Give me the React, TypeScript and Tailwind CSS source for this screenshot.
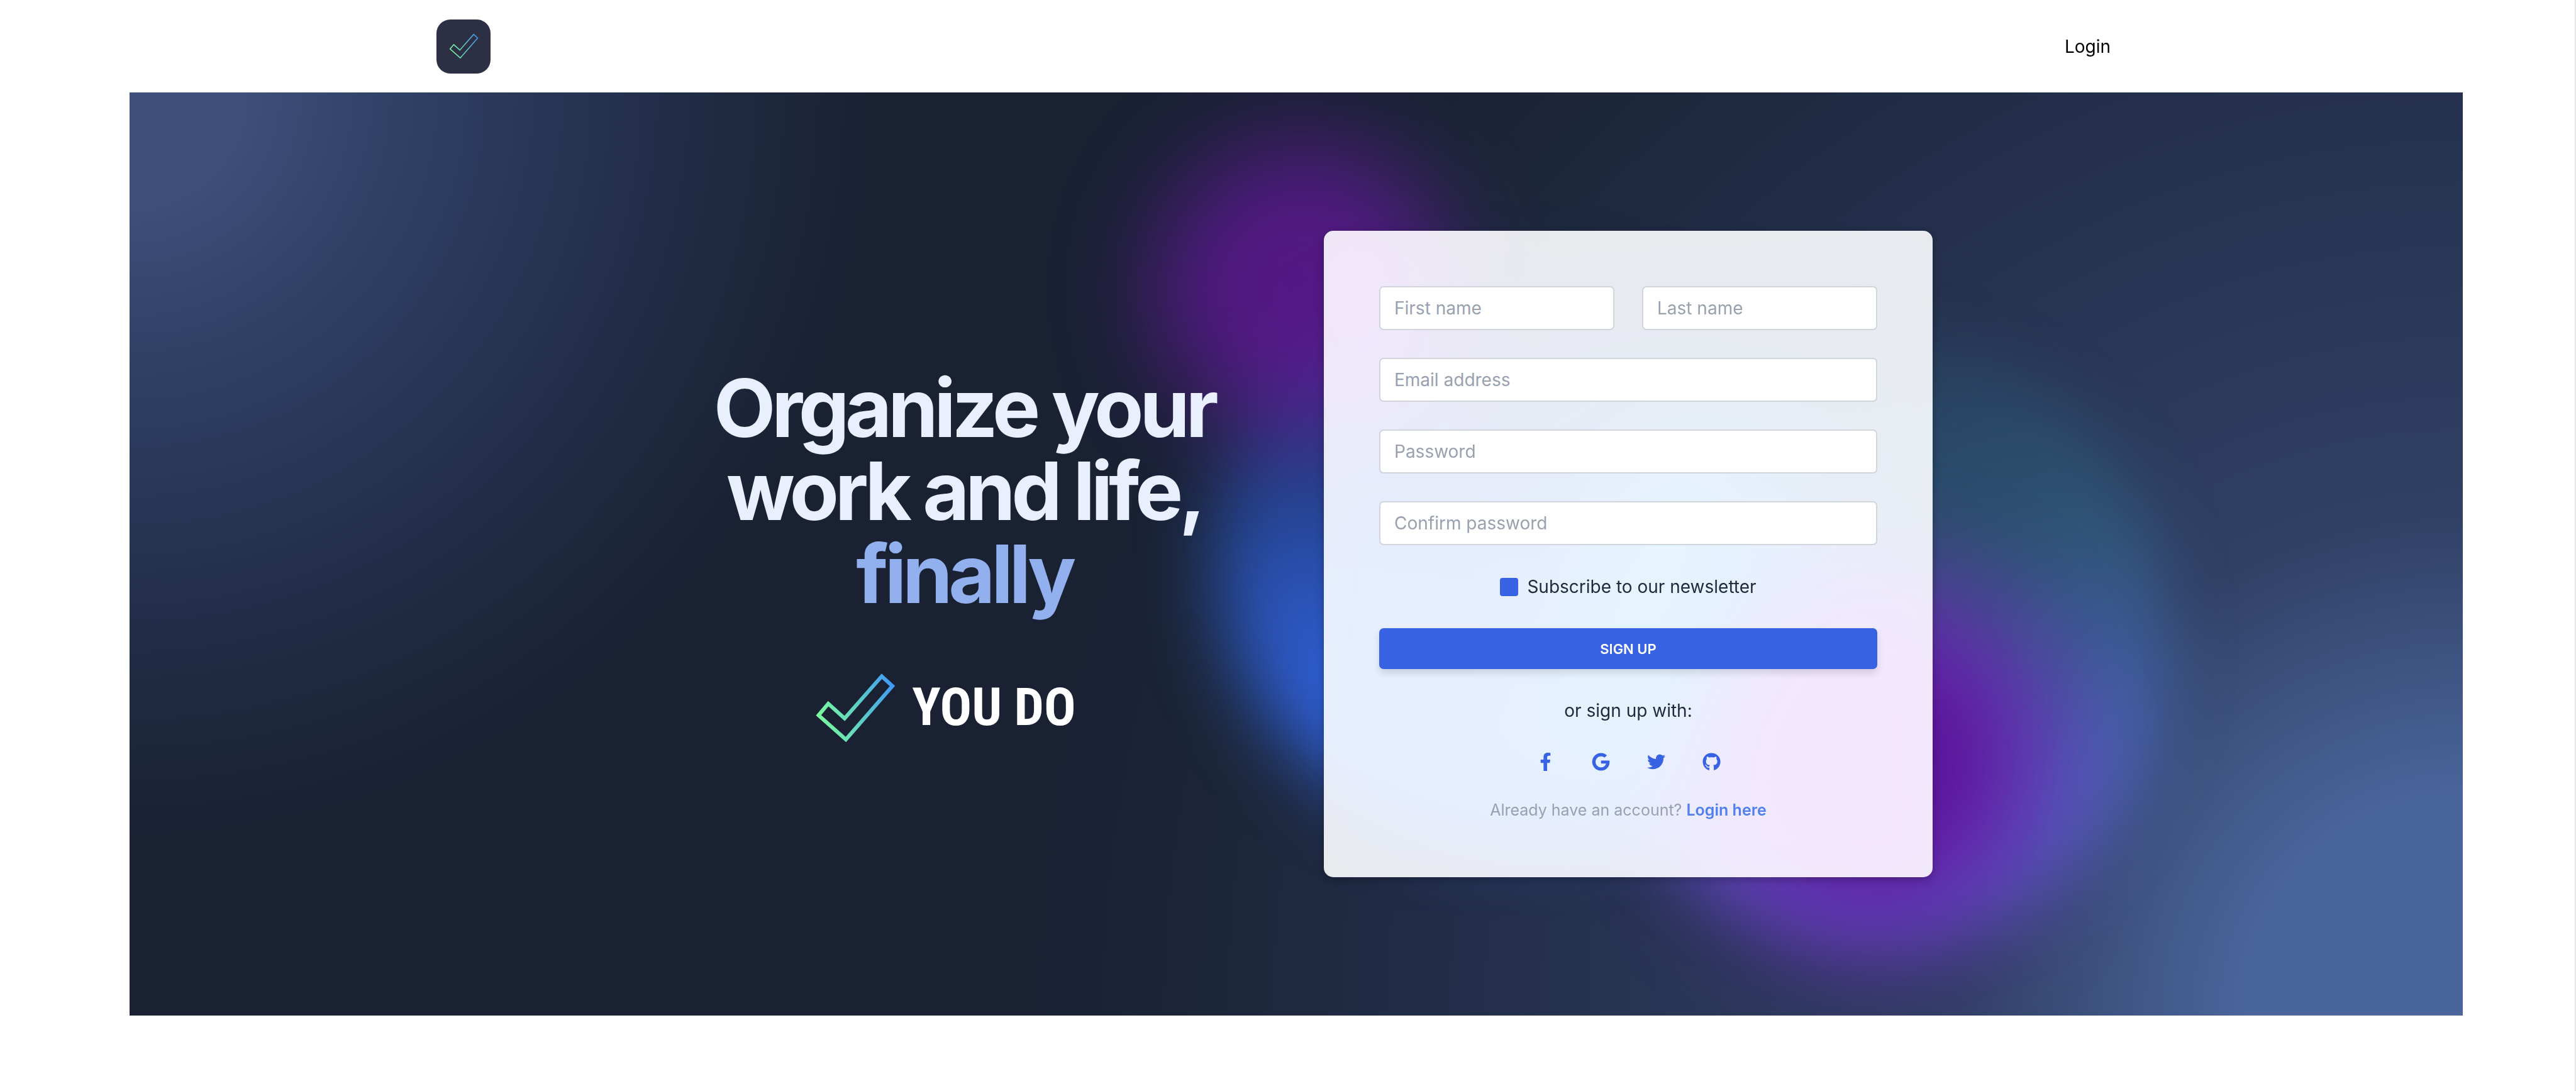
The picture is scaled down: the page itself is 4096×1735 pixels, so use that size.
import type { InputHTMLAttributes, ReactNode } from "react";
import { FaFacebookF, FaGithub, FaGoogle, FaTwitter } from "react-icons/fa";

function CheckMark({ id, className, stroke }: { id: string; className: string; stroke: number }) {
  return (
    <svg viewBox="0 0 126 109" fill="none" className={className} aria-hidden="true">
      <defs>
        <linearGradient id={id} x1="0" y1="60" x2="126" y2="30" gradientUnits="userSpaceOnUse">
          <stop offset="0" stopColor="#7bfb9c" />
          <stop offset="0.5" stopColor="#5fd0c4" />
          <stop offset="1" stopColor="#4199f5" />
        </linearGradient>
      </defs>
      <path
        d="M4.5 66.5 L20 48 L46 71.5 L105 4.5 L122 20 L48 105 Z"
        stroke={`url(#${id})`}
        strokeWidth={stroke}
      />
    </svg>
  );
}

function Field({ label, ...rest }: { label: string } & InputHTMLAttributes<HTMLInputElement>) {
  return (
    <input
      aria-label={label}
      placeholder={label}
      className="h-[70px] w-full min-w-0 rounded-[7px] border-2 border-gray-300 bg-white px-[22px] text-[28px] text-gray-700 placeholder:text-gray-400"
      {...rest}
    />
  );
}

function SocialButton({ label, children }: { label: string; children: ReactNode }) {
  return (
    <button type="button" aria-label={label} className="flex w-[88px] justify-center text-[29px] text-[#3862e4]">
      {children}
    </button>
  );
}

function Header() {
  return (
    <header className="mx-auto flex h-[147px] max-w-[2706px] items-center justify-between">
      <a href="#" aria-label="You Do" className="flex size-[86px] items-center justify-center rounded-[22px] bg-[#2d2f45]">
        <CheckMark id="mark-small" stroke={4} className="w-[47px]" />
      </a>
      <a href="#login" className="px-[44px] text-[28px] text-black">
        Login
      </a>
    </header>
  );
}

function SignUpCard() {
  return (
    <form
      onSubmit={(e) => e.preventDefault()}
      className="relative flex flex-col rounded-[15px] bg-white/90 p-[88px] text-[28px] leading-[44px] text-gray-800 shadow-[0_4px_14px_rgba(0,0,0,0.25)] backdrop-blur-[46px] backdrop-saturate-200"
    >
      <div className="flex flex-col gap-[44px]">
        <div className="grid grid-cols-2 gap-[44px]">
          <Field label="First name" type="text" />
          <Field label="Last name" type="text" />
        </div>
        <Field label="Email address" type="email" />
        <Field label="Password" type="password" />
        <Field label="Confirm password" type="password" />
        <label className="flex items-center justify-center gap-[14px]">
          <input type="checkbox" defaultChecked className="size-[29px] appearance-none rounded-[4px] bg-[#3862e4]" />
          Subscribe to our newsletter
        </label>
        <button
          type="submit"
          className="h-[65px] rounded-[7px] bg-[#3862e4] text-[22px] font-semibold text-white uppercase shadow-[0_7px_12px_rgba(0,0,0,0.12)]"
        >
          Sign up
        </button>
        <p className="text-center">or sign up with:</p>
      </div>
      <div className="flex h-[118px] items-center justify-center">
        <SocialButton label="Facebook">
          <FaFacebookF />
        </SocialButton>
        <SocialButton label="Google">
          <FaGoogle />
        </SocialButton>
        <SocialButton label="Twitter">
          <FaTwitter />
        </SocialButton>
        <SocialButton label="GitHub">
          <FaGithub />
        </SocialButton>
      </div>
      <p className="text-center text-[25px] leading-[37px] text-gray-400">
        Already have an account?{" "}
        <a href="#login" className="font-semibold text-[#4f80ee]">
          Login here
        </a>
      </p>
    </form>
  );
}

function Glow() {
  return (
    <div aria-hidden="true" className="absolute inset-0">
      <div className="absolute top-[70px] -left-[170px] h-[880px] w-[980px] rounded-full bg-[linear-gradient(10deg,#2f60d8_22%,rgba(45,92,208,0.8)_40%,rgba(40,80,190,0.45)_62%,rgba(40,80,190,0.15)_80%,rgba(40,80,190,0.05)_100%)] blur-[60px]" />
      <div className="absolute top-[170px] left-[420px] h-[960px] w-[920px] rounded-full bg-[linear-gradient(165deg,rgba(45,125,150,0.1)_5%,rgba(50,125,155,0.35)_40%,rgba(85,120,225,0.6)_75%)] blur-[50px]" />
      <div className="absolute top-[330px] left-[420px] h-[520px] w-[220px] rotate-12 rounded-full bg-[#10b4dc] opacity-60 blur-[80px]" />
      <div className="absolute -top-[130px] -left-[259px] size-[445px] rounded-full bg-[radial-gradient(#5c0c92,#a020f0)] opacity-65 blur-[85px]" />
      <div className="absolute -right-[200px] -bottom-[120px] size-[600px] rounded-full bg-[radial-gradient(#5a0c90,#8f22dc)] opacity-75 blur-[90px]" />
      <div className="absolute -right-[70px] bottom-[30px] size-[300px] rounded-full bg-[#5a0f98] opacity-80 blur-[60px]" />
    </div>
  );
}

export default function App() {
  return (
    <div className="min-h-screen border-r-2 border-[#e8e8e8] bg-white font-['Inter',sans-serif]">
      <Header />
      <main className="mr-[178px] ml-[206px] overflow-hidden bg-[#192133] bg-[radial-gradient(1196px_circle_at_0%_0%,#3d4f7a_15%,#304166_35%,#202b45_75%,#1c2638_90%,transparent_100%),radial-gradient(2300px_circle_at_100%_100%,#4a659c_15%,#304064_35%,#202b45_75%,#1c2638_88%,#192133_100%)] py-[220px]">
        <div className="mx-auto grid max-w-[2024px] grid-cols-2 items-center gap-[88px]">
          <section className="relative z-10 flex flex-col items-center gap-[92px]">
            <h1 className="text-center text-[128px] leading-[132px] font-bold tracking-tighter text-[#e9effd]">
              Organize your
              <br />
              work and life,
              <br />
              <span className="text-[#93b0ee]">finally</span>
            </h1>
            <div className="flex h-[109px] items-center gap-[27px] pr-[58px]">
              <CheckMark id="mark-large" stroke={6} className="w-[126px]" />
              <span className="font-['Roboto_Condensed','Roboto',sans-serif] text-[84px] leading-none font-bold text-white">
                YOU DO
              </span>
            </div>
          </section>
          <div className="relative">
            <Glow />
            <SignUpCard />
          </div>
        </div>
      </main>
    </div>
  );
}
